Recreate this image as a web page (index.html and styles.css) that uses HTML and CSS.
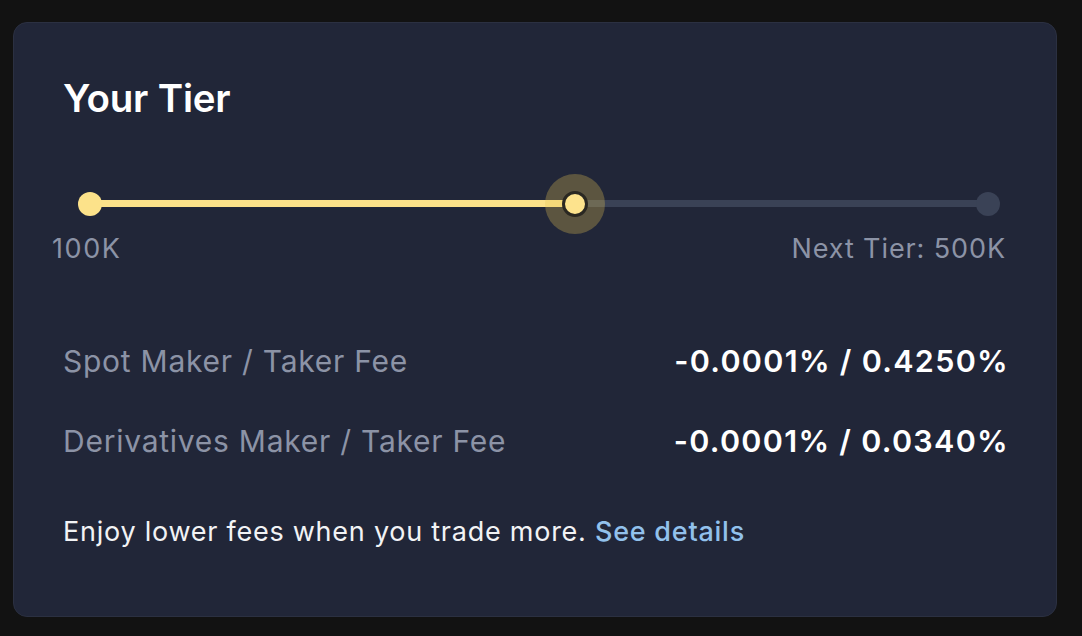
FILE: index.html
```html
<!DOCTYPE html>
<html lang="en">
<head>
<meta charset="utf-8">
<title>Your Tier</title>
<link rel="stylesheet" href="styles.css">
</head>
<body>
  <section class="card">
    <h2 class="title">Your Tier</h2>
    <div class="slider">
      <div class="track">
        <div class="fill" style="width: 54%"></div>
        <span class="dot dot-start"></span>
        <span class="dot dot-end"></span>
        <span class="thumb" style="left: 54%"><span class="thumb-core"></span></span>
      </div>
    </div>
    <div class="tier-labels">
      <span class="tier-start">100K</span>
      <span class="tier-next">Next Tier: 500K</span>
    </div>
    <div class="fees">
      <div class="fee-row">
        <span class="fee-label">Spot Maker / Taker Fee</span>
        <span class="fee-value">-0.0001% / 0.4250%</span>
      </div>
      <div class="fee-row">
        <span class="fee-label">Derivatives Maker / Taker Fee</span>
        <span class="fee-value">-0.0001% / 0.0340%</span>
      </div>
    </div>
    <p class="note">Enjoy lower fees when you trade more. <a class="link" href="#">See details</a></p>
  </section>
</body>
</html>
```
FILE: styles.css
```css
* { box-sizing: border-box; }
html, body { margin: 0; background: #121212; }
body {
  padding: 22px 0 0 13px;
  font-family: Inter, "Noto Sans", "Liberation Sans", sans-serif;
  -webkit-font-smoothing: antialiased;
}
.card {
  width: 1044px;
  height: 595px;
  background: #212638;
  border: 1px solid #2b3041;
  border-radius: 14px;
  padding: 51px 49px 0 49px;
}
.title {
  margin: 0;
  font-size: 38.5px;
  line-height: 48px;
  font-weight: 600;
  color: #ffffff;
  letter-spacing: -0.2px;
}
.slider {
  padding: 78px 19px 0 27px;
}
.track {
  position: relative;
  height: 7px;
  background: #3a4256;
  border-radius: 4px;
}
.fill {
  height: 100%;
  background: #fce28a;
  border-radius: 4px 0 0 4px;
}
.dot {
  position: absolute;
  top: 50%;
  width: 24px;
  height: 24px;
  margin-top: -12px;
  border-radius: 50%;
}
.dot-start { left: -12px; background: #fce28a; }
.dot-end { right: -12px; background: #3a4256; }
.thumb {
  position: absolute;
  top: 50%;
  width: 60px;
  height: 60px;
  margin: -30px 0 0 -30px;
  border-radius: 50%;
  background: rgba(230, 196, 82, 0.3);
  display: flex;
  align-items: center;
  justify-content: center;
}
.thumb-core {
  width: 26px;
  height: 26px;
  border-radius: 50%;
  background: #fde38d;
  border: 3.5px solid #2a2822;
}
.tier-labels {
  display: flex;
  justify-content: space-between;
  margin: 26px 1px 0 -11px;
  font-size: 27px;
  line-height: 32px;
  letter-spacing: 0.9px;
  color: #8c93a6;
}
.tier-start { letter-spacing: 1.6px; }
.fees {
  margin-top: 76px;
  display: flex;
  flex-direction: column;
  gap: 40px;
}
.fee-row {
  display: flex;
  justify-content: space-between;
  align-items: baseline;
  font-size: 30px;
  line-height: 40px;
}
.fee-label { color: #8c93a6; letter-spacing: 0.75px; }
.fee-value { color: #ffffff; font-weight: 600; margin-right: -2px; font-size: 30.5px; letter-spacing: 1.3px; }
.note {
  margin: 55px 0 0;
  font-size: 27px;
  line-height: 32px;
  letter-spacing: 0.75px;
  color: #f2f3f5;
}
.link {
  color: #92c1ec;
  text-decoration: none;
  font-weight: 500;
}
```
